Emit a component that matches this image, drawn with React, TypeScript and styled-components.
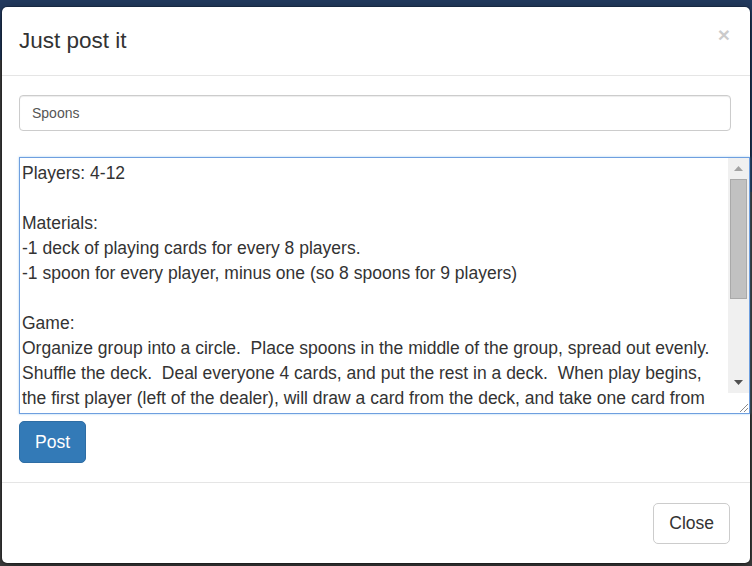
import React from "react";
import styled, { createGlobalStyle } from "styled-components";

const GlobalStyle = createGlobalStyle`
  html, body {
    margin: 0;
    padding: 0;
  }
  body {
    width: 752px;
    height: 566px;
    overflow: hidden;
    font-family: "Liberation Sans", Arial, Helvetica, sans-serif;
    background:
      linear-gradient(to right, transparent 750px, #233b60 750px) top left / 100% 192px no-repeat,
      linear-gradient(#233b60 0 60px, #444444 60px);
  }
  * { box-sizing: border-box; }
`;

const Page = styled.div`
  padding: 6px 0 0 1px;
`;

const Modal = styled.div`
  width: 750px;
  background: #ffffff;
  border: 1px solid rgba(0, 0, 0, 0.2);
  border-radius: 6px;
  box-shadow: 0 5px 15px rgba(0, 0, 0, 0.5);
  background-clip: padding-box;
  display: flex;
  flex-direction: column;
`;

const Header = styled.div`
  display: flex;
  justify-content: space-between;
  align-items: flex-start;
  padding: 18px 20px 18px 17px;
  border-bottom: 1px solid #e5e5e5;
`;

const Title = styled.h4`
  margin: 0;
  font-size: 22.5px;
  line-height: 32px;
  font-weight: 500;
  color: #333333;
`;

const CloseX = styled.button`
  border: 0;
  background: transparent;
  padding: 0;
  margin: -1px 0 0 0;
  font-family: "Liberation Sans", Arial, sans-serif;
  font-size: 21px;
  font-weight: bold;
  line-height: 21px;
  color: #000;
  opacity: 0.2;
  cursor: pointer;
`;

const Body = styled.div`
  display: flex;
  flex-direction: column;
  align-items: flex-start;
  padding: 19px 19px 19px 17px;
`;

const TextInput = styled.input`
  width: 100%;
  height: 36px;
  padding: 6px 12px;
  font-family: "Liberation Sans", Arial, sans-serif;
  font-size: 14px;
  line-height: 20px;
  color: #555555;
  background: #fff;
  border: 1px solid #cccccc;
  border-radius: 4px;
  box-shadow: inset 0 1px 1px rgba(0, 0, 0, 0.075);
  outline: none;
  margin-bottom: 26px;
`;

const TextAreaWrap = styled.div`
  position: relative;
  width: 731px;
  height: 257px;
  margin: 0 0 7px 0;
  box-shadow: 0 0 2px rgba(102, 175, 233, 0.6);
`;

const TextArea = styled.textarea`
  display: block;
  width: 100%;
  height: 100%;
  padding: 3px 23px 2px 2px;
  font-family: "Liberation Sans", Arial, sans-serif;
  font-size: 17.5px;
  line-height: 25px;
  color: #333333;
  border: 1px solid #6f9fdf;
  border-radius: 0;
  outline: none;
  resize: none;
  overflow: hidden;
  white-space: pre-wrap;
  margin: 0;
`;

const ScrollBar = styled.div`
  position: absolute;
  top: 1px;
  right: 1px;
  bottom: 1px;
  width: 21px;
  display: flex;
  flex-direction: column;
  background: #f0f0f0;
`;

const ScrollButton = styled.div`
  height: 21px;
  flex: none;
  display: flex;
  align-items: center;
  justify-content: center;
`;

const Track = styled.div`
  flex: 1;
  display: flex;
  flex-direction: column;
  padding: 0 2px;
`;

const Thumb = styled.div`
  height: 120px;
  background: #c1c1c1;
  border: 1px solid #a9a9a9;
`;

const Corner = styled.div`
  height: 20px;
  flex: none;
  background: #ffffff;
  display: flex;
  align-items: flex-end;
  justify-content: flex-end;
`;

const Button = styled.button<{ $primary?: boolean }>`
  font-family: "Liberation Sans", Arial, sans-serif;
  font-size: 17.5px;
  line-height: 25px;
  padding: ${(p) => (p.$primary ? "8px 15px 7px" : "7px 15px")};
  border-radius: 5px;
  border: 1px solid ${(p) => (p.$primary ? "#2e6da4" : "#cccccc")};
  background: ${(p) => (p.$primary ? "#337ab7" : "#ffffff")};
  color: ${(p) => (p.$primary ? "#ffffff" : "#333333")};
  cursor: pointer;
`;

const Footer = styled.div`
  display: flex;
  justify-content: flex-end;
  padding: 20px 20px 19px 17px;
  border-top: 1px solid #e5e5e5;
`;

const content = `Players: 4-12

Materials:
-1 deck of playing cards for every 8 players.
-1 spoon for every player, minus one (so 8 spoons for 9 players)

Game:
Organize group into a circle.  Place spoons in the middle of the group, spread out evenly.
Shuffle the deck.  Deal everyone 4 cards, and put the rest in a deck.  When play begins,
the first player (left of the dealer), will draw a card from the deck, and take one card from
their hand and pass it to the player on their left.  Each player picks up the card passed to
them, keeps or discards one, and passes a card on to the left.  The last player discards
into a pile.  When a player gets four of a kind, they quietly take a spoon from the middle.
Once one spoon is gone, every player may grab a spoon.  The player left without a spoon
gets a letter, spelling out S-P-O-O-N-S.  Once a player has spelled SPOONS, they are out.
The last player remaining wins!`;

export default function App() {
  return (
    <>
      <GlobalStyle />
      <Page>
        <Modal>
          <Header>
            <Title>Just post it</Title>
            <CloseX aria-label="Close">×</CloseX>
          </Header>
          <Body>
            <TextInput type="text" defaultValue="Spoons" />
            <TextAreaWrap>
              <TextArea defaultValue={content} spellCheck={false} />
              <ScrollBar aria-hidden="true">
                <ScrollButton>
                  <svg width="9" height="5" viewBox="0 0 9 5">
                    <polygon points="0,5 4.5,0 9,5" fill="#a3a3a3" />
                  </svg>
                </ScrollButton>
                <Track>
                  <Thumb />
                </Track>
                <ScrollButton>
                  <svg width="9" height="5" viewBox="0 0 9 5">
                    <polygon points="0,0 9,0 4.5,5" fill="#505050" />
                  </svg>
                </ScrollButton>
                <Corner>
                  <svg width="12" height="12" viewBox="0 0 12 12">
                    <line x1="11" y1="3" x2="3" y2="11" stroke="#8a8a8a" strokeWidth="1" />
                    <line x1="11" y1="7" x2="7" y2="11" stroke="#8a8a8a" strokeWidth="1" />
                  </svg>
                </Corner>
              </ScrollBar>
            </TextAreaWrap>
            <Button $primary>Post</Button>
          </Body>
          <Footer>
            <Button>Close</Button>
          </Footer>
        </Modal>
      </Page>
    </>
  );
}
